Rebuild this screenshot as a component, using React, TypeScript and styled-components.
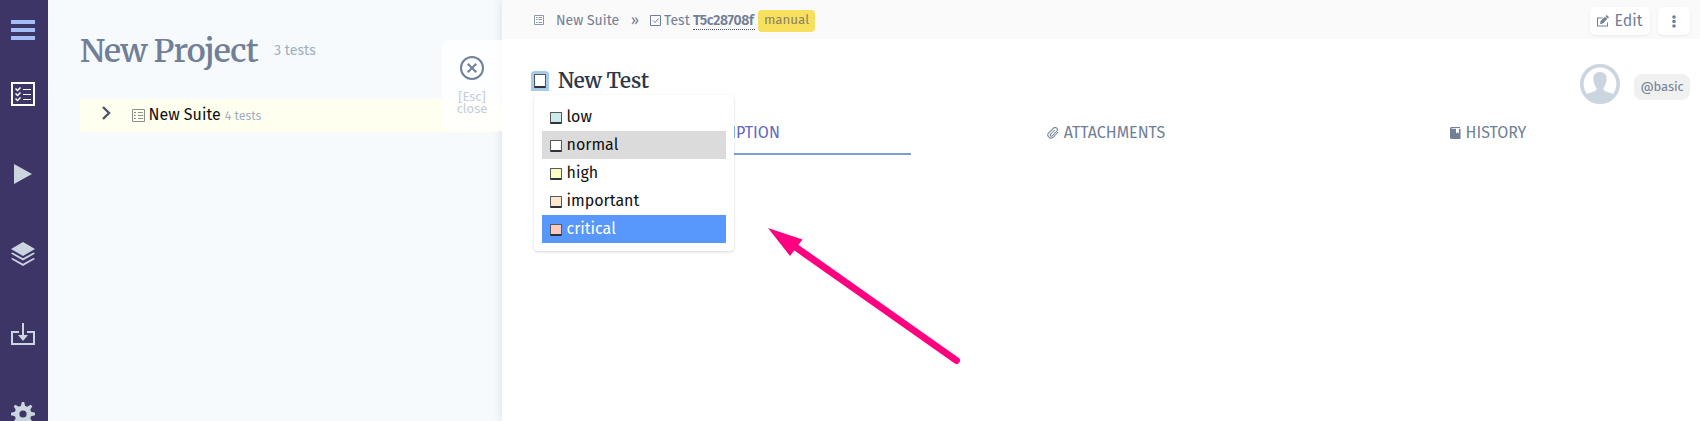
import React from "react";
import styled, { createGlobalStyle } from "styled-components";

const GlobalStyle = createGlobalStyle`
  *, *::before, *::after { box-sizing: border-box; }
  body {
    margin: 0;
    overflow: hidden;
    background: #f6fafd;
    color: #718096;
    font-family: "Fira Sans", "Open Sans", sans-serif;
    font-stretch: 95%;
    font-size: 16px;
    line-height: 1;
  }
  svg { display: block; flex: none; }
`;

const Page = styled.div`
  display: flex;
  height: 421px;
  overflow: hidden;
`;

const Sidebar = styled.nav`
  flex: none;
  width: 48px;
  display: flex;
  flex-direction: column;
  align-items: center;
  padding-right: 2px;
  background: #3c3566;
  color: #cbd5e0;
`;

const MenuItem = styled.a<{ $height?: number; $color?: string }>`
  flex: none;
  height: ${(p) => p.$height ?? 80}px;
  display: flex;
  align-items: center;
  color: ${(p) => p.$color ?? "inherit"};
`;

const ProjectPane = styled.section`
  flex: none;
  width: 454px;
  padding: 27px 0 0 32px;
`;

const ProjectHeader = styled.header`
  display: flex;
  height: 72px;
  white-space: nowrap;
`;

const ProjectTitle = styled.h1`
  margin: 0;
  width: 194px;
  font: 700 32px/48px "Merriweather", "Noto Serif", serif;
  font-weight: 600;
  letter-spacing: -0.75px;
`;

const Count = styled.span<{ $size: number; $line?: number }>`
  color: #a0aec0;
  font-size: ${(p) => p.$size}px;
  line-height: ${(p) => (p.$line ? `${p.$line}px` : "inherit")};
`;

const SuiteRow = styled.div`
  display: flex;
  align-items: center;
  height: 33px;
  padding-left: 21px;
  background: #fffff0;
  color: #111;
  white-space: nowrap;
`;

const Chevron = styled.span`
  width: 31px;
  padding-bottom: 5px;
  color: #4a5568;
`;

const SuiteLabel = styled.span`
  display: flex;
  align-items: baseline;
  gap: 4px;
  margin-left: 3.5px;
  padding-bottom: 2px;
`;

const Panel = styled.main`
  position: relative;
  flex: 1;
  min-width: 0;
  background: #fff;
  box-shadow: 0 0 10px rgba(0, 0, 0, 0.12);
`;

const CloseTab = styled.button`
  position: absolute;
  top: 40px;
  left: -60px;
  width: 60px;
  height: 91px;
  display: flex;
  flex-direction: column;
  align-items: center;
  padding: 16px 0 0;
  border: 0;
  border-radius: 8px 0 0 8px;
  background: rgba(255, 255, 255, 0.8);
  color: #718096;
  font: inherit;
`;

const CloseHint = styled.span`
  margin-top: 11px;
  color: #c3cdda;
  font-size: 13px;
  line-height: 12px;
  text-align: center;
`;

const TopBar = styled.div`
  display: flex;
  align-items: center;
  justify-content: space-between;
  height: 39px;
  padding: 0 10px 0 32px;
  background: #fafafa;
`;

const Breadcrumb = styled.div`
  display: flex;
  align-items: center;
  padding-top: 1px;
  font-size: 14px;
  line-height: 20px;
  white-space: nowrap;
`;

const Crumb = styled.span<{ $width: number; $ml?: number }>`
  width: ${(p) => p.$width}px;
  margin-left: ${(p) => p.$ml ?? 0}px;
  padding-top: 1px;
`;

const TestId = styled.b`
  width: 62px;
  margin-left: 3px;
  padding-top: 3px;
  border-bottom: 1px dotted #4a5568;
  font-weight: 600;
  letter-spacing: -0.35px;
  line-height: 16px;
`;

const Badge = styled.span`
  width: 57px;
  height: 22px;
  margin: 2px 0 0 3px;
  border-radius: 4px;
  background: #f6e05e;
  color: #8b8262;
  font-size: 13.3px;
  line-height: 21px;
  text-align: center;
`;

const Actions = styled.div`
  display: flex;
  gap: 8px;
  padding-top: 3px;
`;

const Button = styled.button<{ $width: number }>`
  display: flex;
  align-items: center;
  justify-content: center;
  gap: 5px;
  width: ${(p) => p.$width}px;
  height: 28px;
  padding: 0;
  border: 0;
  border-radius: 5px;
  background: #fff;
  box-shadow: 0 1px 3px rgba(0, 0, 0, 0.07);
  color: #718096;
  font: inherit;
`;

const TestHeader = styled.div`
  display: flex;
  justify-content: space-between;
  height: 74px;
  padding: 25px 10px 0 29px;
`;

const TitleGroup = styled.div`
  display: flex;
  align-items: flex-start;
  gap: 9px;
`;

const PriorityToggle = styled.span`
  display: flex;
  justify-content: center;
  width: 18px;
  height: 20px;
  margin-top: 7px;
  padding-top: 3px;
  border-radius: 4px 4px 0 0;
  background: #a6cbe9;
`;

const Swatch = styled.span<{ $fill: string; $height?: number }>`
  flex: none;
  width: 12px;
  height: ${(p) => p.$height ?? 12}px;
  border: 1px solid #555a5e;
  border-bottom: 2px solid #2d3338;
  border-radius: 1px;
  background: ${(p) => p.$fill};
`;

const TestTitle = styled.h2`
  margin: 0;
  color: #2d3748;
  font: 600 20.5px/34px "Merriweather", "Noto Serif", serif;
  letter-spacing: -0.15px;
  white-space: nowrap;
`;

const Owner = styled.div`
  display: flex;
  align-items: flex-start;
  gap: 14px;
`;

const Tag = styled.span`
  width: 56px;
  height: 26px;
  margin-top: 10px;
  border-radius: 8px;
  background: #f0f0f0;
  font-size: 13px;
  line-height: 26px;
  text-align: center;
  letter-spacing: -0.1px;
`;

const Tabs = styled.div`
  display: flex;
  gap: 8px;
  padding: 0 21px 0 35px;
`;

const Tab = styled.a<{ $active?: boolean }>`
  flex: none;
  width: 374px;
  height: 42px;
  display: flex;
  align-items: center;
  justify-content: center;
  gap: 5px;
  border-bottom: 2px solid ${(p) => (p.$active ? "#7f9cd4" : "transparent")};
  color: ${(p) => (p.$active ? "#6268c4" : "#718096")};
`;

const Menu = styled.ul`
  position: absolute;
  top: 95px;
  left: 32px;
  width: 200px;
  margin: 0;
  padding: 8px;
  border-radius: 4px;
  background: #fff;
  box-shadow: 0 1px 3px rgba(0, 0, 0, 0.16);
  list-style: none;
`;

const Option = styled.li<{ $state?: "current" | "hover" }>`
  display: flex;
  align-items: center;
  gap: 4.5px;
  height: 28px;
  padding: 0 8px 1px;
  background: ${(p) => (p.$state === "hover" ? "#5897fb" : p.$state === "current" ? "#dbdbdb" : "transparent")};
  color: ${(p) => (p.$state === "hover" ? "#fff" : "#111")};

  ${Swatch} { margin-top: 3px; }
`;

const Arrow = styled.svg`
  position: absolute;
  top: 220px;
  left: 260px;
`;

const Checklist = () => (
  <svg width="24" height="24" viewBox="0 0 24 24" fill="none" stroke="currentColor">
    <rect x="1" y="1" width="22" height="22" strokeWidth="2" />
    <path d="M12 7.5h8M12 12.5h8M12 17.5h8" />
    <path d="M4.5 6.5l2 2 3-3M4.5 11.5l2 2 3-3M4.5 16.5l2 2 3-3" strokeWidth="1.5" />
  </svg>
);

const priorities: { name: string; fill: string; state?: "current" | "hover" }[] = [
  { name: "low", fill: "#cdebea" },
  { name: "normal", fill: "#ffffff", state: "current" },
  { name: "high", fill: "#fdfdc4" },
  { name: "important", fill: "#fde8cb" },
  { name: "critical", fill: "#fcc9bf", state: "hover" },
];

export default function App() {
  return (
    <>
      <GlobalStyle />
      <Page>
        <Sidebar>
          <MenuItem $height={60} $color="#a3bffa">
            <svg width="24" height="20" viewBox="0 0 24 20" fill="currentColor">
              <path d="M0 0h24v4H0zM0 8h24v4H0zM0 16h24v4H0z" />
            </svg>
          </MenuItem>
          <MenuItem $height={68} $color="#fff">
            <Checklist />
          </MenuItem>
          <MenuItem $height={92}>
            <svg width="18" height="20" viewBox="0 0 18 20" fill="currentColor">
              <path d="M0 0l18 10L0 20z" />
            </svg>
          </MenuItem>
          <MenuItem $height={68}>
            <svg width="24" height="24" viewBox="0 0 24 24" fill="currentColor">
              <path d="M12 0l12 7-12 7L0 7z" />
              <path d="M1.5 10.5L0 11.6l12 7 12-7-1.5-1.1L12 16.3z" />
              <path d="M1.5 15.9L0 17l12 7 12-7-1.5-1.1L12 21.7z" />
            </svg>
          </MenuItem>
          <MenuItem $height={92}>
            <svg width="24" height="22" viewBox="0 0 24 22" fill="currentColor">
              <path d="M0 8h8v2H2v10h20V10h-6V8h8v14H0z" />
              <path d="M11 0h2v12h4l-5 6-5-6h4z" />
            </svg>
          </MenuItem>
          <MenuItem $height={68}>
            <svg width="24" height="24" viewBox="0 0 20 20" fill="currentColor">
              <path d="M3.94 6.5L2.22 3.64l1.42-1.42L6.5 3.94c.52-.3 1.1-.54 1.7-.7L9 0h2l.8 3.24c.6.16 1.18.4 1.7.7l2.86-1.72 1.42 1.42-1.72 2.86c.3.52.54 1.1.7 1.7L20 9v2l-3.24.8c-.16.6-.4 1.18-.7 1.7l1.72 2.86-1.42 1.42-2.86-1.72c-.52.3-1.1.54-1.7.7L11 20H9l-.8-3.24c-.6-.16-1.18-.4-1.7-.7l-2.86 1.72-1.42-1.42 1.72-2.86c-.3-.52-.54-1.1-.7-1.7L0 11V9l3.24-.8c.16-.6.4-1.18.7-1.7zM10 13a3 3 0 1 0 0-6 3 3 0 0 0 0 6z" />
            </svg>
          </MenuItem>
        </Sidebar>

        <ProjectPane>
          <ProjectHeader>
            <ProjectTitle>New Project</ProjectTitle>
            <Count $size={14.2} $line={48}>3 tests</Count>
          </ProjectHeader>
          <SuiteRow>
            <Chevron>
              <svg width="11" height="14" viewBox="0 0 11 14" fill="none" stroke="currentColor" strokeWidth="2.4">
                <path d="M2 1l6 6-6 6" />
              </svg>
            </Chevron>
            <svg width="13" height="13" viewBox="0 0 13 13" fill="none" stroke="#8b918c">
              <path d="M.5.5h12v12H.5zM6 3.5h5M6 6.5h5M6 9.5h5M2 3.5h2M2 6.5h2M2 9.5h2" />
            </svg>
            <SuiteLabel>
              New Suite <Count $size={12.3}>4 tests</Count>
            </SuiteLabel>
          </SuiteRow>
        </ProjectPane>

        <Panel>
          <CloseTab>
            <svg width="24" height="24" viewBox="0 0 24 24" fill="none" stroke="currentColor" strokeWidth="2">
              <circle cx="12" cy="12" r="11" />
              <path d="M7.7 7.7l8.6 8.6M16.3 7.7l-8.6 8.6" />
            </svg>
            <CloseHint>
              [Esc]
              <br />
              close
            </CloseHint>
          </CloseTab>

          <TopBar>
            <Breadcrumb>
              <svg width="10" height="10" viewBox="0 0 10 10" fill="none" stroke="#8d98aa">
                <path d="M.5.5h9v9h-9zM4.5 2.5H8M4.5 4.5H8M4.5 7.5H8M2 2.5h1.5M2 4.5h1.5M2 7.5h1.5" />
              </svg>
              <Crumb $width={75} $ml={12}>New Suite</Crumb>
              <Crumb $width={19}>»</Crumb>
              <svg width="11" height="11" viewBox="0 0 11 11" fill="none" stroke="currentColor">
                <path d="M.5.5h10v10H.5zM3 5.5l2 2 3.5-4" />
              </svg>
              <Crumb $width={26} $ml={3}>Test</Crumb>
              <TestId>T5c28708f</TestId>
              <Badge>manual</Badge>
            </Breadcrumb>
            <Actions>
              <Button $width={60}>
                <svg width="12" height="12" viewBox="0 0 12 12" fill="currentColor">
                  <path d="M0 2.5h5.5v1H1v7h9V7.5h1v4H0z" />
                  <path d="M3 9l.6-3L8 1.7l2.3 2.3-4.4 4.4zM8.5 1.2L9.7 0 12 2.3l-1.2 1.2z" />
                </svg>
                Edit
              </Button>
              <Button $width={32}>
                <svg width="4" height="13" viewBox="0 0 4 13" fill="currentColor">
                  <circle cx="2" cy="2" r="1.8" />
                  <circle cx="2" cy="6.5" r="1.8" />
                  <circle cx="2" cy="11" r="1.8" />
                </svg>
              </Button>
            </Actions>
          </TopBar>

          <TestHeader>
            <TitleGroup>
              <PriorityToggle>
                <Swatch $fill="#fff" $height={14} />
              </PriorityToggle>
              <TestTitle>New Test</TestTitle>
            </TitleGroup>
            <Owner>
              <svg width="40" height="40" viewBox="0 0 40 40" fill="#cbd5e0">
                <circle cx="20" cy="20" r="18.2" fill="none" stroke="#cbd5e0" strokeWidth="3.6" />
                <path d="M20 8c-4.5 0-7 3-6.6 7.5.3 3.7 1.6 6.5 3 8.2v2.5c-1.5 1.7-7.4 2-11.4 4.6C8 36 14 39 20 39s12-3 15-8.2c-4-2.6-9.9-2.900-11.400-4.600v-2.500c1.400-1.700 2.700-4.500 3-8.200C27 11 24.500 8 20 8z" />
              </svg>
              <Tag>@basic</Tag>
            </Owner>
          </TestHeader>

          <Tabs>
            <Tab $active>
              <svg width="12" height="11" viewBox="0 0 12 11" fill="none" stroke="currentColor">
                <path d="M0 1.5h11M0 4.5h11M0 7.5h11M0 10.5h7" />
              </svg>
              DESCRIPTION
            </Tab>
            <Tab>
              <svg width="12" height="12" viewBox="0 0 24 24" fill="none" stroke="currentColor" strokeWidth="2.1" strokeLinecap="round">
                <path d="M22 10.5l-9.5 9.5a6 6 0 0 1-9-8.5l9.5-9a4.2 4.2 0 0 1 6.5 6l-9 9a2.3 2.3 0 0 1-3.5-3l8-8" />
              </svg>
              ATTACHMENTS
            </Tab>
            <Tab>
              <svg width="11" height="12" viewBox="0 0 11 12" fill="currentColor">
                <path d="M1.5 0H10v1H1.5v.8H6V6.5l1.5-1.2L9 6.5V1.8h1.5V12h-9A1.5 1.5 0 0 1 0 10.5v-9A1.5 1.5 0 0 1 1.5 0z" />
              </svg>
              HISTORY
            </Tab>
          </Tabs>

          <Menu>
            {priorities.map((p) => (
              <Option key={p.name} $state={p.state}>
                <Swatch $fill={p.fill} />
                {p.name}
              </Option>
            ))}
          </Menu>

          <Arrow width="205" height="150" viewBox="762 220 205 150">
            <path d="M794 246L956.5 360.5" stroke="#ff0080" strokeWidth="7" strokeLinecap="round" />
            <path d="M768 228l34.5 11.5L790 256z" fill="#ff0080" />
          </Arrow>
        </Panel>
      </Page>
    </>
  );
}
